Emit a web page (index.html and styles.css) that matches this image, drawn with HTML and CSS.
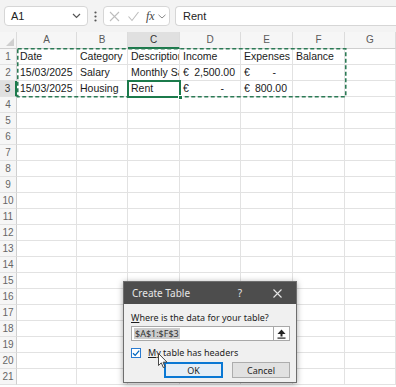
FILE: index.html
```html
<!DOCTYPE html>
<html>
<head>
<meta charset="utf-8">
<link rel="stylesheet" href="styles.css">
</head>
<body>
<div class="app">
  <div class="toolbar">
    <div class="namebox">
      <span>A1</span>
      <svg class="chev" width="9" height="6" viewBox="0 0 9 6"><path d="M1 1 L4.5 4.5 L8 1" fill="none" stroke="#555" stroke-width="1.2"/></svg>
    </div>
    <div class="dots">
      <svg width="3" height="11" viewBox="0 0 3 11"><circle cx="1.5" cy="1.5" r="1.1" fill="#555"/><circle cx="1.5" cy="5.5" r="1.1" fill="#555"/><circle cx="1.5" cy="9.5" r="1.1" fill="#555"/></svg>
    </div>
    <div class="fxbox">
      <svg width="11" height="11" viewBox="0 0 11 11"><path d="M1 1 L10 10 M10 1 L1 10" stroke="#bdbdbd" stroke-width="1.1" fill="none"/></svg>
      <svg width="11" height="11" viewBox="0 0 11 11"><path d="M0.5 5.5 L4 9.5 L10.5 1" stroke="#bdbdbd" stroke-width="1.1" fill="none"/></svg>
      <span class="fx">fx</span>
      <svg width="8" height="5" viewBox="0 0 8 5"><path d="M0.5 0.8 L4 4 L7.5 0.8" fill="none" stroke="#8a8a8a" stroke-width="1"/></svg>
    </div>
    <div class="formula">Rent</div>
  </div>

  <div class="sheet">
    <div class="row head">
      <div class="corner"><svg width="8" height="8" viewBox="0 0 8 8"><polygon points="8,0 8,8 0,8" fill="#cfcfcf"/></svg></div>
      <div class="ch">A</div><div class="ch">B</div><div class="ch active">C</div><div class="ch">D</div><div class="ch">E</div><div class="ch">F</div><div class="ch">G</div>
    </div>
    <div class="row">
      <div class="rh">1</div><div>Date</div><div>Category</div><div>Description</div><div>Income</div><div>Expenses</div><div>Balance</div><div></div>
    </div>
    <div class="row">
      <div class="rh">2</div><div>15/03/2025</div><div>Salary</div><div>Monthly Salary</div>
      <div class="acc"><span>€</span><span>2,500.00</span></div>
      <div class="acc"><span>€</span><span class="dash">-</span></div>
      <div></div><div></div>
    </div>
    <div class="row">
      <div class="rh active">3</div><div>15/03/2025</div><div>Housing</div><div>Rent</div>
      <div class="acc"><span>€</span><span class="dash">-</span></div>
      <div class="acc"><span>€</span><span>800.00</span></div>
      <div></div><div></div>
    </div>
    <div class="row"><div class="rh">4</div><div></div><div></div><div></div><div></div><div></div><div></div><div></div></div>
    <div class="row"><div class="rh">5</div><div></div><div></div><div></div><div></div><div></div><div></div><div></div></div>
    <div class="row"><div class="rh">6</div><div></div><div></div><div></div><div></div><div></div><div></div><div></div></div>
    <div class="row"><div class="rh">7</div><div></div><div></div><div></div><div></div><div></div><div></div><div></div></div>
    <div class="row"><div class="rh">8</div><div></div><div></div><div></div><div></div><div></div><div></div><div></div></div>
    <div class="row"><div class="rh">9</div><div></div><div></div><div></div><div></div><div></div><div></div><div></div></div>
    <div class="row"><div class="rh">10</div><div></div><div></div><div></div><div></div><div></div><div></div><div></div></div>
    <div class="row"><div class="rh">11</div><div></div><div></div><div></div><div></div><div></div><div></div><div></div></div>
    <div class="row"><div class="rh">12</div><div></div><div></div><div></div><div></div><div></div><div></div><div></div></div>
    <div class="row"><div class="rh">13</div><div></div><div></div><div></div><div></div><div></div><div></div><div></div></div>
    <div class="row"><div class="rh">14</div><div></div><div></div><div></div><div></div><div></div><div></div><div></div></div>
    <div class="row"><div class="rh">15</div><div></div><div></div><div></div><div></div><div></div><div></div><div></div></div>
    <div class="row"><div class="rh">16</div><div></div><div></div><div></div><div></div><div></div><div></div><div></div></div>
    <div class="row"><div class="rh">17</div><div></div><div></div><div></div><div></div><div></div><div></div><div></div></div>
    <div class="row"><div class="rh">18</div><div></div><div></div><div></div><div></div><div></div><div></div><div></div></div>
    <div class="row"><div class="rh">19</div><div></div><div></div><div></div><div></div><div></div><div></div><div></div></div>
    <div class="row"><div class="rh">20</div><div></div><div></div><div></div><div></div><div></div><div></div><div></div></div>
    <div class="row"><div class="rh">21</div><div></div><div></div><div></div><div></div><div></div><div></div><div></div></div>

    <svg class="ants" width="330" height="50" viewBox="0 0 330 50"><rect x="0.75" y="0.75" width="328" height="48" fill="none" stroke="#2b7a55" stroke-width="1.6" stroke-dasharray="4 2.5"/></svg>
    <div class="selcell"><span class="handle"></span></div>
  </div>

  <div class="dialog">
    <div class="dlg-title">
      <span class="dlg-name">Create Table</span>
      <span class="dlg-help">?</span>
      <svg class="dlg-close" width="9" height="9" viewBox="0 0 9 9"><path d="M0.5 0.5 L8.5 8.5 M8.5 0.5 L0.5 8.5" stroke="#e6e6e6" stroke-width="1.1" fill="none"/></svg>
    </div>
    <div class="dlg-body">
      <div class="dlg-label"><u>W</u>here is the data for your table?</div>
      <div class="dlg-input">
        <div class="field"><span class="seltext">$A$1:$F$3</span></div>
        <div class="pick"><svg width="9" height="10" viewBox="0 0 9 10"><polygon points="4.5,0.5 8.5,5 0.5,5" fill="#222"/><rect x="3.5" y="4.5" width="2" height="3" fill="#222"/><rect x="0.5" y="8.5" width="8" height="1.2" fill="#222"/></svg></div>
      </div>
      <div class="dlg-check">
        <span class="box"><svg width="10" height="10" viewBox="0 0 10 10"><path d="M2 5.2 L4.2 7.4 L8.2 2.6" fill="none" stroke="#0067c0" stroke-width="1.3"/></svg></span>
        <span><u>M</u>y table has headers</span>
      </div>
      <div class="dlg-buttons">
        <div class="btn ok">OK</div>
        <div class="btn">Cancel</div>
      </div>
    </div>
  </div>

  <svg class="cursor" width="10" height="16" viewBox="0 0 10 16"><path d="M0.5 0.5 L0.5 12.5 L3.3 9.8 L5.3 14.5 L7 13.8 L5.1 9.2 L9 9.2 Z" fill="#fff" stroke="#333" stroke-width="0.9"/></svg>
</div>
</body>
</html>
```

FILE: styles.css
```css
* { box-sizing: border-box; margin: 0; padding: 0; }
html, body { width: 396px; height: 387px; overflow: hidden; background: #fff; }
body { font-family: "Liberation Sans", Arial, sans-serif; }

.app { position: relative; width: 396px; height: 387px; overflow: hidden; background: #fff; }

/* toolbar */
.toolbar {
  display: flex; align-items: center;
  height: 32px; padding-left: 4px;
  background: #f3f3f3;
}
.namebox {
  width: 84px; height: 20px;
  display: flex; align-items: center; justify-content: space-between;
  padding: 0 6px 0 6px;
  background: #fff; border: 1px solid #d6d6d6; border-radius: 4px;
  font-size: 11px; color: #222;
}
.dots { width: 15px; display: flex; justify-content: center; align-items: center; }
.fxbox {
  width: 67px; height: 20px;
  display: flex; align-items: center;
  padding-left: 5px; gap: 8px;
  background: #fff; border: 1px solid #d6d6d6; border-radius: 4px;
}
.fx {
  font-family: "Liberation Serif", "Times New Roman", serif;
  font-style: italic; font-size: 12px; color: #444;
  margin-left: -1px; margin-right: -5px;
}
.formula {
  flex: 1; margin-left: 5px; height: 20px;
  display: flex; align-items: center; padding-left: 7px;
  background: #fff; border: 1px solid #d6d6d6; border-right: none;
  border-radius: 4px 0 0 4px;
  font-size: 11px; color: #222;
}

/* sheet */
.sheet { position: relative; }
.row {
  display: grid;
  grid-template-columns: 17px 60px 51px 52px 61px 52px 52px 51px;
  height: 16px;
}
.row > div {
  border-right: 1px solid #e2e2e2;
  border-bottom: 1px solid #e2e2e2;
  font-size: 10.5px; line-height: 15px;
  padding-left: 3px;
  white-space: nowrap; overflow: hidden;
  color: #1a1a1a;
}
.row.head { height: 17px; }
.row.head > div {
  background: #f6f6f6;
  border-right-color: #dcdcdc;
  border-bottom-color: #cfcfcf;
  text-align: center; padding: 0;
  font-size: 10px; line-height: 16px; color: #5a5a5a;
}
.row.head > .corner {
  display: flex; align-items: flex-end; justify-content: flex-end;
  padding: 0 2px 2px 0;
}
.row.head > .ch.active {
  background: #e0e0e0;
  border-bottom: 2px solid #1b7a4b;
  line-height: 15px; color: #333;
}
.row > .rh {
  background: #f6f6f6;
  border-right-color: #cfcfcf;
  border-bottom-color: #e2e2e2;
  text-align: center; padding: 0;
  font-size: 10px; color: #666;
}
.row > .rh.active {
  background: #e0e0e0;
  border-right: 2px solid #1b7a4b;
  color: #333;
}
.row > .acc {
  display: flex; justify-content: space-between;
  padding-right: 5px;
}
.acc .dash { margin-right: 11px; }

.ants { position: absolute; left: 17px; top: 16px; }
.selcell {
  position: absolute; left: 127px; top: 48px;
  width: 54px; height: 18px;
  border: 2px solid #1b7a4b;
}
.handle {
  position: absolute; right: -4px; bottom: -4px;
  width: 5px; height: 5px;
  background: #1b7a4b; border: 1px solid #fff;
}

/* dialog */
.dialog {
  position: absolute; left: 123px; top: 281px;
  width: 174px; height: 102px;
  background: #f0f0f0;
  border: 1px solid #6e6e6e;
  box-shadow: 0 1px 6px rgba(0,0,0,0.35);
  font-family: "Noto Sans", "Open Sans", sans-serif;
  font-size: 9px; color: #1e1e1e;
}
.dlg-title {
  display: flex; align-items: center;
  height: 22px; padding-left: 8px;
  background: #4d4d4d; color: #e6e6e6;
  font-size: 10px;
}
.dlg-name { flex: 1; }
.dlg-help { margin-right: 31px; font-size: 10px; }
.dlg-close { margin-right: 14px; }
.dlg-body {
  display: flex; flex-direction: column;
  padding: 8px 6px 0 7px;
}
.dlg-label { height: 12px; line-height: 12px; }
.dlg-input { display: flex; height: 15px; margin-top: 2px; }
.field {
  flex: 1; display: flex; align-items: center;
  padding-left: 2px;
  background: #fff; border: 1px solid #a8a8a8; border-right: none;
}
.seltext { background: #cdcdcd; color: #333; line-height: 11px; padding: 0 1px; }
.pick {
  width: 17px; display: flex; align-items: center; justify-content: center;
  background: #fdfdfd; border: 1px solid #a8a8a8;
}
.dlg-check {
  display: flex; align-items: center; gap: 7px;
  height: 11px; margin-top: 6px;
}
.box {
  width: 10px; height: 10px;
  display: flex;
  background: #fff; border: 1px solid #2a7bd0;
}
.box svg { margin: -1px; }
.dlg-buttons {
  display: flex; justify-content: flex-end; gap: 9px;
  margin-top: 4px;
}
.btn {
  width: 58px; height: 16px;
  display: flex; align-items: center; justify-content: center;
  background: #e1e1e1; border: 1px solid #adadad;
}
.btn.ok { width: 59px; border: 2px solid #0a78d4; background: #e5eef7; }

.cursor { position: absolute; left: 158px; top: 353px; }
```
